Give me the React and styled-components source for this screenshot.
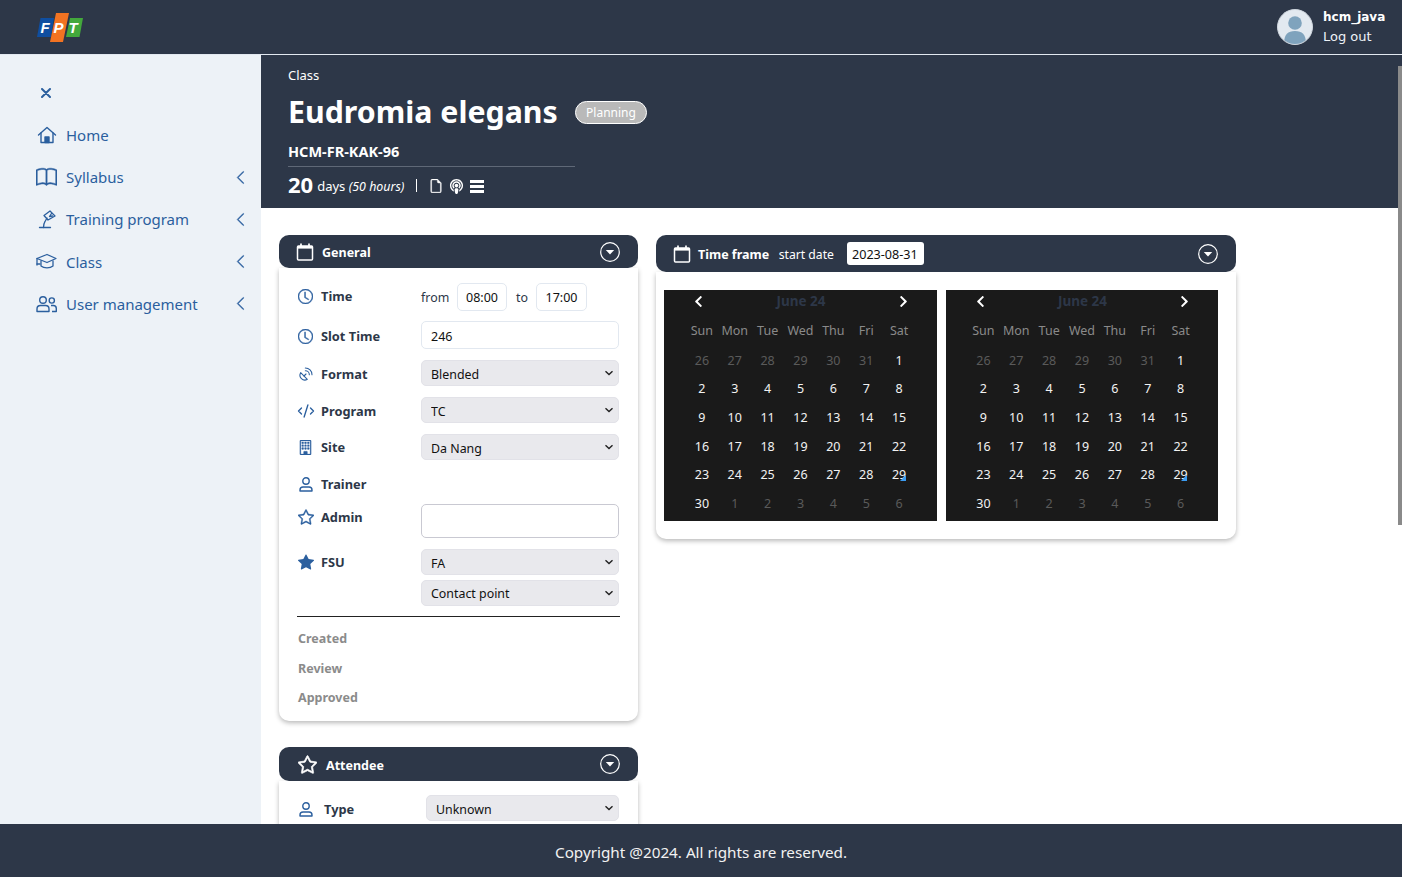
import React from "react";
import styled, { createGlobalStyle, css } from "styled-components";
import { BsBook, BsBuilding, BsStar, BsStarFill, BsFileEarmark, BsClock, BsChevronLeft } from "react-icons/bs";
import { LuCodeXml, LuSatelliteDish } from "react-icons/lu";
import { FaPodcast, FaChevronLeft, FaChevronRight } from "react-icons/fa";

const Global = createGlobalStyle`
  html, body { margin: 0; padding: 0; height: 100%; overflow: hidden; }
  body { font-family: "Noto Sans", "Open Sans", sans-serif; color: #2d3748; background: #fff; }
  * { box-sizing: border-box; }
`;

const arrow = "url(\"data:image/svg+xml,%3Csvg xmlns='http://www.w3.org/2000/svg' width='10' height='6' viewBox='0 0 10 6'%3E%3Cpath d='M1.5 1.2 5 4.6l3.5-3.4' fill='none' stroke='%23222' stroke-width='1.4'/%3E%3C/svg%3E\")";

const Shell = styled.div`display:flex;flex-direction:column;height:100vh;`;
const TopBar = styled.header`
  height:55px;flex:none;background:#2d3748;border-bottom:1px solid #e2e8f0;
  display:flex;align-items:center;justify-content:space-between;padding:0 17px 0 37px;
`;
const User = styled.div`display:flex;align-items:center;gap:10px;`;
const UserText = styled.div`
  font-family:"DejaVu Sans",sans-serif;font-size:13px;line-height:20px;color:#edf2f7;width:62px;white-space:nowrap;
  b{display:block;font-weight:700;font-size:12px;color:#fff;}
`;
const Body = styled.div`flex:1;min-height:0;display:flex;`;
const Side = styled.nav`
  width:261px;flex:none;background:#edf2f7;color:#2b5f9e;padding:27px 13.5px 0 36px;
`;
const CloseBtn = styled.div`height:22px;display:flex;align-items:center;padding-left:5px;margin-bottom:9.7px;`;
const NavItem = styled.div`
  height:42.25px;display:flex;align-items:center;font-size:15px;
  span{flex:1;margin-left:9px;}
`;
const NavIcon = styled.div`width:21px;height:20px;display:flex;align-items:center;justify-content:center;svg{display:block;}`;
const Main = styled.main`flex:1;min-width:0;overflow:hidden;position:relative;`;
const Thumb = styled.div`position:absolute;right:0;top:11px;width:4px;height:459px;background:#8a8a8a;`;
const Banner = styled.section`background:#2d3748;color:#fff;height:153px;padding:10px 27px 0;`;
const Crumb = styled.div`font-size:13px;line-height:20px;`;
const TitleRow = styled.div`display:flex;align-items:center;margin-top:8px;height:38px;`;
const Title = styled.h1`margin:0;font-size:30.3px;font-weight:700;line-height:38px;width:268px;white-space:nowrap;`;
const Pill = styled.span`
  margin-left:19px;background:#b9b9b9;border:1px solid #fff;border-radius:12px;height:23px;width:72px;
  display:flex;align-items:center;justify-content:center;font-size:12px;color:#fff;
`;
const Code = styled.div`font-size:14.5px;font-weight:700;line-height:20px;margin-top:10px;width:287px;padding-bottom:5px;border-bottom:1px solid #5f6877;`;
const Stats = styled.div`display:flex;align-items:center;height:38px;margin-top:-2px;b{font-size:22px;margin-right:4px;}`;
const Days = styled.span`font-size:13px;padding-top:4px;i{font-size:12.4px;}`;
const StatSep = styled.span`width:1px;height:13px;background:#fff;margin:3px 12px 0;`;
const StatIcons = styled.div`display:flex;align-items:center;gap:6px;margin-top:4px;`;
const FileIcon = styled(BsFileEarmark)`font-size:14px;stroke:#fff;stroke-width:.5;`;
const CastIcon = styled(FaPodcast)`font-size:15px;`;
const Bars = styled.div`width:14px;display:flex;flex-direction:column;gap:2px;span{height:3px;background:#fff;}`;
const Columns = styled.div`display:flex;align-items:flex-start;gap:18px;padding:27px 0 0 18px;`;
const Col = styled.div`width:${p=>p.$w}px;flex:none;`;
const CardHead = styled.div`
  height:${p=>p.$h}px;background:#2d3748;color:#fff;border-radius:10px;position:relative;z-index:1;
  display:flex;align-items:center;padding:0 18px 0 17px;font-size:12.5px;font-weight:700;
`;
const HeadLabel = styled.span`margin-left:${p=>p.$m||8}px;padding-top:2px;`;
const HeadSub = styled.span`font-weight:400;font-size:12.2px;margin-left:9.500px;padding-top:2px;`;
const DateBox = styled.input`
  margin-left:13px;width:77px;height:23px;border:0;border-radius:3px;background:#fff;color:#111;
  font:12.6px "Noto Sans",sans-serif;padding:2px 5px 0;
`;
const Toggle = styled.div`margin-left:auto;display:flex;`;
const CardBody = styled.div`
  background:#fff;border-radius:0 0 10px 10px;box-shadow:0 2px 5px rgba(0,0,0,.28);padding:${p=>p.$p};
  height:${p=>p.$h ? p.$h+"px" : "auto"};margin-bottom:26px;
`;
const Row = styled.div`display:flex;align-items:${p=>p.$top?"flex-start":"center"};height:${p=>p.$h||26}px;margin-top:${p=>p.$mt||0}px;`;
const Label = styled.div`
  width:${p=>p.$w||124}px;flex:none;display:flex;align-items:center;font-size:12.8px;font-weight:700;color:#2d3748;
  padding-left:1px;padding-top:${p=>p.$pt||0}px;padding-bottom:${p=>p.$pb||0}px;span{margin-left:${p=>p.$gap||8}px;}
`;
const LIcon = styled.span`
  width:15px;display:flex;justify-content:center;color:#2b5f9e;font-size:${p=>p.$s||15}px;margin-left:0!important;flex:none;
  svg{flex:none;}
  ${p=>p.$bold && css`svg{stroke:currentColor;stroke-width:${p.$bold};}`}
`;
const Sel = styled.select`
  appearance:none;width:${p=>p.$w||198}px;height:26px;background:#e9e9ed ${arrow} no-repeat right 4px center;
  border:1px solid #e2e2e8;border-radius:5px;
  font:12.4px "Noto Sans",sans-serif;color:#111;padding:${p=>p.$pt??2}px 20px 0 9px;
`;
const Txt = styled.input`
  width:${p=>p.$w||198}px;height:${p=>p.$h||28}px;border:1px solid ${p=>p.$c||"#e2e8f0"};border-radius:5px;background:#fff;
  font:12.5px "Noto Sans",sans-serif;color:#111;padding:${p=>p.$a?"0":"2px 9px 0"};text-align:${p=>p.$a||"left"};
`;
const FromLabel = styled.span`font-size:12.4px;color:#2d3748;width:36px;flex:none;`;
const ToLabel = styled.span`font-size:12.4px;color:#2d3748;width:29px;padding-left:9px;flex:none;`;
const Hr = styled.hr`border:0;border-top:1px solid #222;margin:10px 0 0;width:323px;`;
const Muted = styled.div`font-size:12.5px;font-weight:700;color:#8b8b8b;height:${p=>p.$h}px;line-height:${p=>p.$h}px;padding-left:1px;margin-top:${p=>p.$mt||0}px;`;
const CardEnd = styled.div`height:10px;`;
const Cals = styled.div`display:flex;gap:9px;`;
const Cal = styled.div`width:272.5px;height:231px;background:#1a1a1a;padding:0 21px 0 21.5px;color:#fff;`;
const CalHead = styled.div`
  height:22px;display:flex;align-items:center;justify-content:space-between;padding:0 5.5px 0 6.5px;font-size:13px;
  span{font-size:13.5px;font-weight:700;color:#2d3748;}
`;
const CalGrid = styled.div`display:grid;grid-template-columns:repeat(7,1fr);grid-auto-rows:28.7px;margin-top:5.2px;`;
const Cell = styled.div`
  position:relative;display:flex;align-items:center;justify-content:center;font-size:12.5px;padding-bottom:${p=>p.$wd?3:0}px;
  color:${p=>p.$wd?"#8a8a8a":p.$out?"#5a5a5a":"#f2f2f2"};
`;
const Corner = styled.i`
  position:absolute;left:17px;top:14px;width:0;height:0;border-left:6px solid transparent;border-bottom:6px solid #3b9bf0;
`;
const Foot = styled.footer`height:53px;flex:none;background:#2d3748;color:#f2f2f2;display:flex;align-items:center;justify-content:center;font-size:15.25px;padding-top:2px;`;

const Logo = () => (
  <svg width="46" height="30" viewBox="0 0 46 30">
    <path d="M3.5 6H17l-3 19H0z" fill="#0f4ea0"/>
    <path d="M19 1h13l-6 29H13z" fill="#f27322"/>
    <path d="M33 6h13l-3.500 19H29z" fill="#43a83c"/>
    <g fill="#fff" fontFamily="Liberation Sans" fontWeight="700" fontStyle="italic" fontSize="15">
      <text x="3.500" y="21">F</text><text x="16.500" y="21">P</text><text x="31.500" y="21">T</text>
    </g>
  </svg>
);
const Avatar = () => (
  <svg width="36" height="36" viewBox="0 0 36 36">
    <circle cx="18" cy="18" r="17.500" fill="#e2e9f0" stroke="#cfd6de"/>
    <clipPath id="av"><circle cx="18" cy="18" r="17"/></clipPath>
    <g clipPath="url(#av)" fill="#7fa3bd">
      <circle cx="18" cy="14" r="6.800"/>
      <path d="M7 35c0-10 4-13 11-13s11 3 11 13z"/>
    </g>
  </svg>
);
const Home = () => (
  <svg width="20" height="20" viewBox="0 0 20 20" fill="none" stroke="currentColor" strokeWidth="1.4" strokeLinejoin="round" strokeLinecap="round">
    <path d="M1.500 10 10 2.500 18.500 10"/>
    <path d="M4 8v9.500h12V8"/>
    <path d="M8 17.500V12h4v5.500z" fill="currentColor"/>
  </svg>
);
const Lamp = () => (
  <svg width="20" height="20" viewBox="0 0 20 20" fill="none" stroke="currentColor" strokeWidth="1.3" strokeLinejoin="round" strokeLinecap="round">
    <path d="M2.500 18.500h11"/>
    <path d="M6.500 18.500c0-2 .3-4 1.400-5.800L10 9"/>
    <path d="M7 6.500 13 2l5 5-7 4z"/>
    <path d="M14.500 4.500l-2 3 3-.5"/>
  </svg>
);
const Cap = () => (
  <svg width="21" height="17" viewBox="0 0 21 17" fill="none" stroke="currentColor" strokeWidth="1.3" strokeLinejoin="round" strokeLinecap="round">
    <path d="M11 1.500 1 5.500l10 4 9-4z"/>
    <path d="M5 8v5c3 2.500 9 2.500 12 0V8"/>
    <path d="M1 5.500V12"/>
    <path d="M1 11h3"/>
  </svg>
);
const Users = () => (
  <svg width="21" height="18" viewBox="0 0 21 18" fill="none" stroke="currentColor" strokeWidth="1.4" strokeLinejoin="round">
    <circle cx="7" cy="5" r="3.300"/>
    <path d="M1 16.500v-2.500c0-2 1.500-3.500 3.500-3.500h5c2 0 3.500 1.500 3.500 3.500v2.500z"/>
    <circle cx="15.800" cy="5.500" r="2.600"/>
    <path d="M15 10.500h2.300c2 0 3 1.300 3 3v3H16"/>
  </svg>
);
const Close = () => (
  <svg width="10" height="10" viewBox="0 0 10 10" stroke="currentColor" strokeWidth="2" strokeLinecap="round">
    <path d="M1 1l8 8M9 1l-8 8"/>
  </svg>
);
const Person = () => (
  <svg width="14" height="15" viewBox="0 0 14 15" fill="none" stroke="currentColor" strokeWidth="1.4">
    <circle cx="7" cy="4" r="3.200"/>
    <path d="M1 14v-1c0-2 1.300-3 3-3h6c1.700 0 3 1 3 3v1z" strokeLinejoin="round"/>
  </svg>
);
const CalIcon = () => (
  <svg width="18" height="18" viewBox="0 0 18 18" fill="none" stroke="#fff">
    <rect x="1.500" y="3" width="15" height="14" rx="1" strokeWidth="1.500"/>
    <path d="M1.500 4.300h15" strokeWidth="2.600"/>
    <path d="M5 .5v3M13 .5v3" strokeWidth="1.700"/>
  </svg>
);
const StarShape = styled(BsStar)`margin-left:2px;font-size:19px;stroke:#fff;stroke-width:.6;`;
const StarIcon = () => <StarShape />;
const DownCircle = () => (
  <svg width="20" height="20" viewBox="0 0 20 20">
    <circle cx="10" cy="10" r="9.300" fill="none" stroke="#fff" strokeWidth="1.200"/>
    <path d="M5.800 8h8.400L10 12.600z" fill="#fff"/>
  </svg>
);
const Head = ({ icon: Icon, title, h, m, children }) => (
  <CardHead $h={h}>
    <Icon />
    <HeadLabel $m={m}>{title}</HeadLabel>
    {children}
    <Toggle><DownCircle /></Toggle>
  </CardHead>
);

const Calendar = () => {
  const wd = ["Sun","Mon","Tue","Wed","Thu","Fri","Sat"];
  const out1 = [26,27,28,29,30,31];
  const days = Array.from({length:30},(_,i)=>i+1);
  const out2 = [1,2,3,4,5,6];
  return (
    <Cal>
      <CalHead><FaChevronLeft /><span>June 24</span><FaChevronRight /></CalHead>
      <CalGrid>
        {wd.map(d=><Cell key={d} $wd>{d}</Cell>)}
        {out1.map(d=><Cell key={"a"+d} $out>{d}</Cell>)}
        {days.map(d=><Cell key={d}>{d}{d===29 && <Corner />}</Cell>)}
        {out2.map(d=><Cell key={"b"+d} $out>{d}</Cell>)}
      </CalGrid>
    </Cal>
  );
};

const Book = () => <BsBook size={21} stroke="currentColor" strokeWidth={0.35} />;
const nav = [
  [Home,"Home",false],
  [Book,"Syllabus",true],
  [Lamp,"Training program",true],
  [Cap,"Class",true],
  [Users,"User management",true],
];

export default function App() {
  return (
    <Shell>
      <Global />
      <TopBar>
        <Logo />
        <User>
          <Avatar />
          <UserText><b>hcm_java</b>Log out</UserText>
        </User>
      </TopBar>
      <Body>
        <Side>
          <CloseBtn><Close /></CloseBtn>
          {nav.map(([I,t,c])=>(
            <NavItem key={t}>
              <NavIcon><I /></NavIcon>
              <span>{t}</span>
              {c && <BsChevronLeft size={15} stroke="currentColor" strokeWidth={0.5} />}
            </NavItem>
          ))}
        </Side>
        <Main>
          <Thumb />
          <Banner>
            <Crumb>Class</Crumb>
            <TitleRow><Title>Eudromia elegans</Title><Pill>Planning</Pill></TitleRow>
            <Code>HCM-FR-KAK-96</Code>
            <Stats>
              <b>20</b>
              <Days>days <i>(50 hours)</i></Days>
              <StatSep />
              <StatIcons><FileIcon /><CastIcon /><Bars><span /><span /><span /></Bars></StatIcons>
            </Stats>
          </Banner>
          <Columns>
            <Col $w={359}>
              <Head icon={CalIcon} title="General" h={33} m={8} />
              <CardBody $p="15px 18px 0">
                <Row $h={28}>
                  <Label $pb={2}><LIcon $bold={0.5}><BsClock /></LIcon><span>Time</span></Label>
                  <FromLabel>from</FromLabel>
                  <Txt $w={50} $a="center" readOnly defaultValue="08:00" />
                  <ToLabel>to</ToLabel>
                  <Txt $w={51} $a="center" readOnly defaultValue="17:00" />
                </Row>
                <Row $h={28} $mt={10}>
                  <Label $pt={2}><LIcon $bold={0.5}><BsClock /></LIcon><span>Slot Time</span></Label>
                  <Txt readOnly defaultValue="246" />
                </Row>
                <Row $mt={11}>
                  <Label $pt={2}><LIcon><LuSatelliteDish size={16} strokeWidth={1.6} /></LIcon><span>Format</span></Label>
                  <Sel defaultValue="Blended"><option>Blended</option></Sel>
                </Row>
                <Row $mt={11}>
                  <Label $pt={2}><LIcon><LuCodeXml size={18} strokeWidth={1.8} /></LIcon><span>Program</span></Label>
                  <Sel defaultValue="TC"><option>TC</option></Sel>
                </Row>
                <Row $mt={11}>
                  <Label><LIcon $bold={0.3}><BsBuilding /></LIcon><span>Site</span></Label>
                  <Sel defaultValue="Da Nang"><option>Da Nang</option></Sel>
                </Row>
                <Row $mt={11}>
                  <Label><LIcon><Person /></LIcon><span>Trainer</span></Label>
                </Row>
                <Row $h={34} $mt={7} $top>
                  <Label $pt={4}><LIcon $s={16} $bold={0.4}><BsStar /></LIcon><span>Admin</span></Label>
                  <Txt $h={34} $c="#c9c9d2" readOnly />
                </Row>
                <Row $mt={11}>
                  <Label><LIcon $s={16}><BsStarFill /></LIcon><span>FSU</span></Label>
                  <Sel defaultValue="FA"><option>FA</option></Sel>
                </Row>
                <Row $mt={5}>
                  <Label />
                  <Sel $pt={0} defaultValue="Contact point"><option>Contact point</option></Sel>
                </Row>
                <Hr />
                <Muted $h={29} $mt={7}>Created</Muted>
                <Muted $h={31}>Review</Muted>
                <Muted $h={27}>Approved</Muted>
                <CardEnd />
              </CardBody>
              <Head icon={StarIcon} title="Attendee" h={34} m={9} />
              <CardBody $p="14px 18px 0" $h={60}>
                <Row>
                  <Label $w={129} $gap={11} $pt={2}><LIcon><Person /></LIcon><span>Type</span></Label>
                  <Sel $w={193} defaultValue="Unknown"><option>Unknown</option></Sel>
                </Row>
              </CardBody>
            </Col>
            <Col $w={580}>
              <Head icon={CalIcon} title="Time frame" h={37} m={7}>
                <HeadSub>start date</HeadSub>
                <DateBox readOnly defaultValue="2023-08-31" />
              </Head>
              <CardBody $p="18px 8px 18px">
                <Cals><Calendar /><Calendar /></Cals>
              </CardBody>
            </Col>
          </Columns>
        </Main>
      </Body>
      <Foot>Copyright @2024. All rights are reserved.</Foot>
    </Shell>
  );
}
